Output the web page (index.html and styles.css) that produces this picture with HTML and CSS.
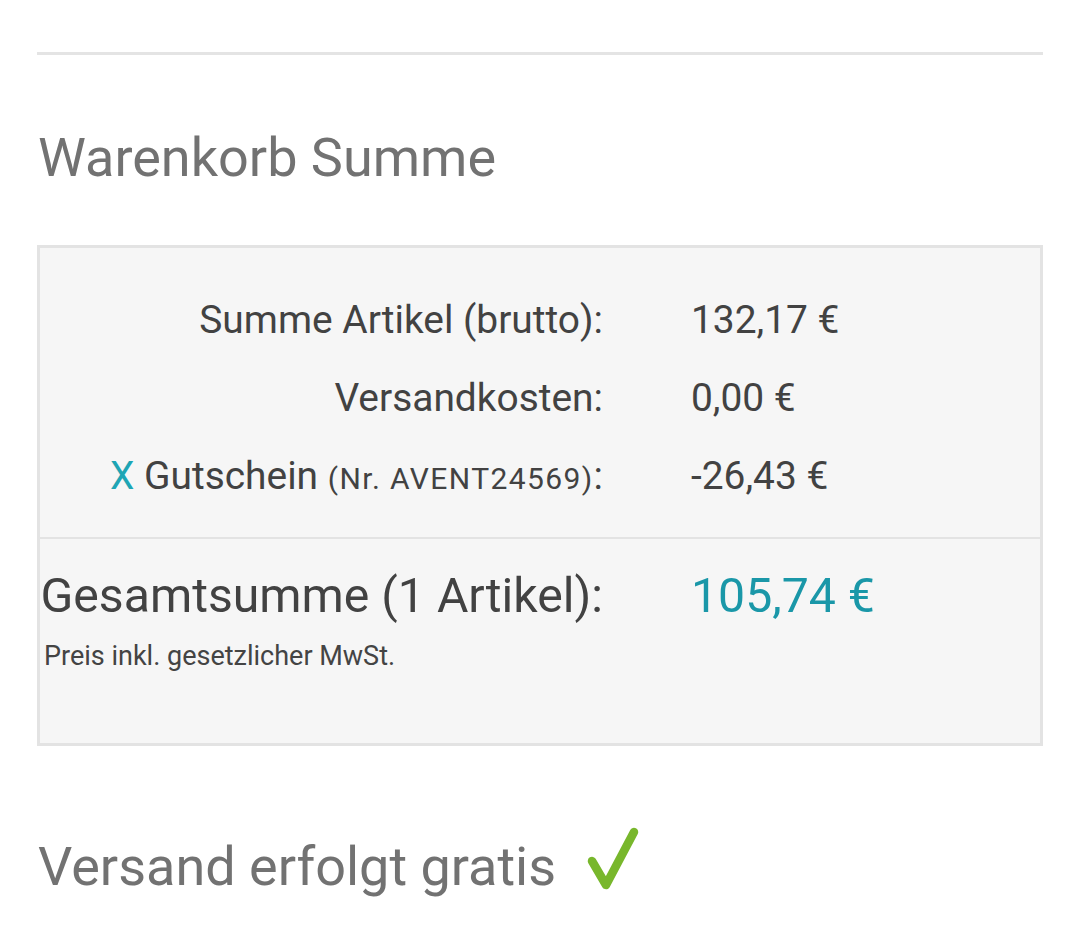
FILE: index.html
```html
<!DOCTYPE html>
<html lang="de">
<head>
<meta charset="utf-8">
<title>Warenkorb Summe</title>
<link rel="stylesheet" href="styles.css">
</head>
<body>
<div class="page">
  <div class="rule"></div>
  <h2 class="title">Warenkorb Summe</h2>
  <div class="box">
    <div class="rows">
      <div class="label">Summe Artikel (brutto):</div>
      <div class="value">132,17 €</div>
      <div class="label">Versandkosten:</div>
      <div class="value">0,00 €</div>
      <div class="label"><span class="remove">X</span> Gutschein <span class="code">(Nr. AVENT24569)</span>:</div>
      <div class="value">-26,43 €</div>
    </div>
    <div class="total">
      <div class="total-row">
        <div class="total-label">Gesamtsumme (1 Artikel):</div>
        <div class="total-value">105,74 €</div>
      </div>
      <div class="vat">Preis inkl. gesetzlicher MwSt.</div>
    </div>
  </div>
  <div class="shipping">
    <span>Versand erfolgt gratis</span>
    <svg class="check" width="60" height="66" viewBox="0 0 60 66" aria-hidden="true">
      <path d="M7 36 L21 60 L49 7" fill="none" stroke="#78b72c" stroke-width="8.5" stroke-linecap="round" stroke-linejoin="round"/>
    </svg>
  </div>
</div>
</body>
</html>
```
FILE: styles.css
```css
html, body {
  margin: 0;
  padding: 0;
  background: #ffffff;
}

.page {
  padding: 0 37px;
  font-family: Roboto, "Liberation Sans", Arial, sans-serif;
}

.rule {
  margin-top: 52px;
  height: 3px;
  background: #e4e4e4;
}

.title {
  margin: 71px 0 54px 1px;
  font-size: 54px;
  line-height: 64.8px;
  font-weight: 400;
  color: #727272;
}

.box {
  border: 3px solid #e3e3e3;
  background: #f6f6f6;
}

.rows {
  display: grid;
  grid-template-columns: 563px 1fr;
  column-gap: 88px;
  padding: 33px 0 22px;
  font-size: 38.9px;
  line-height: 78px;
  color: #424242;
}

.label {
  text-align: right;
  white-space: nowrap;
}

.remove {
  color: #1ea5b4;
}

.code {
  font-size: 30px;
  line-height: 1;
  letter-spacing: 1.4px;
}

.total {
  border-top: 2px solid #e3e3e3;
  padding: 27px 0 69px;
}

.total-row {
  display: grid;
  grid-template-columns: 563px 1fr;
  column-gap: 88px;
  font-size: 48.2px;
  line-height: 60px;
  color: #424242;
}

.total-label {
  text-align: right;
  white-space: nowrap;
}

.total-value {
  color: #1a97a8;
}

.vat {
  margin-top: 12px;
  padding-left: 4px;
  font-size: 27px;
  line-height: 36px;
  color: #444444;
}

.shipping {
  margin-top: 89px;
  display: flex;
  align-items: center;
  gap: 29px;
  font-size: 54px;
  line-height: 64.8px;
  color: #727272;
  padding-left: 1px;
}

.check {
  display: block;
  margin-top: -18px;
}
```
